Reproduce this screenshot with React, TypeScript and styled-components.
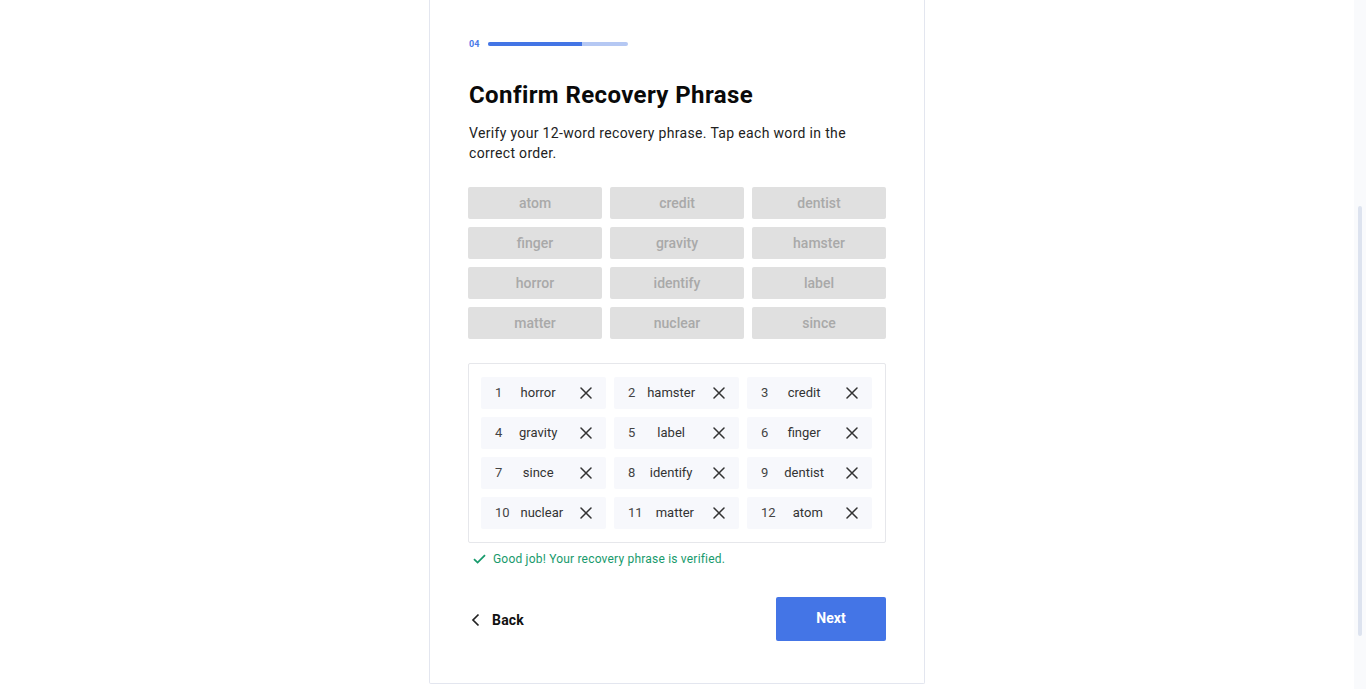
import React from 'react';
import styled, { createGlobalStyle } from 'styled-components';

const GlobalStyle = createGlobalStyle`
  html, body {
    margin: 0;
    padding: 0;
    background: #ffffff;
    overflow: hidden;
  }
  body {
    font-family: Roboto, 'Noto Sans', 'Liberation Sans', sans-serif;
    color: #111;
  }
  * {
    box-sizing: border-box;
  }
`;

const Page = styled.div`
  display: flex;
  height: 689px;
  width: 1366px;
`;

const Main = styled.main`
  flex: 1 1 auto;
  display: flex;
  justify-content: center;
  align-items: flex-end;
  padding-bottom: 5px;
`;

const ScrollTrack = styled.div`
  flex: 0 0 12px;
  background: #f9fafc;
  padding: 206px 4px 53px 4px;
  display: flex;
`;

const ScrollThumb = styled.div`
  flex: 1;
  background: #dde3ef;
  border-radius: 2px;
`;

const Card = styled.section`
  width: 496px;
  border: 1px solid #e3e6ef;
  border-top: none;
  border-radius: 0 0 2px 2px;
  padding: 38px 38px 42px;
  display: flex;
  flex-direction: column;
`;

const Progress = styled.div`
  display: flex;
  align-items: center;
  gap: 9px;
  height: 12px;
`;

const StepLabel = styled.span`
  font-size: 9px;
  font-weight: 700;
  color: #4a7ae8;
  padding-left: 1px;
`;

const Bar = styled.div`
  width: 140px;
  height: 4px;
  border-radius: 2px;
  background: #b5c8f3;
  overflow: hidden;
  display: flex;
`;

const BarFill = styled.div<{ $pct: number }>`
  width: ${(p) => p.$pct}%;
  background: #4375e5;
`;

const Title = styled.h1`
  margin: 31px 0 0;
  padding-left: 1px;
  font-size: 24px;
  line-height: 28px;
  font-weight: 700;
  letter-spacing: 0.4px;
  color: #0a0a0a;
`;

const Subtitle = styled.p`
  margin: 14px 0 0;
  padding-left: 1px;
  font-size: 14px;
  line-height: 20px;
  letter-spacing: 0.33px;
  color: #222;
  padding-right: 30px;
`;

const WordGrid = styled.div`
  margin-top: 24px;
  display: grid;
  grid-template-columns: repeat(3, 1fr);
  gap: 8px;
`;

const WordButton = styled.button`
  height: 32px;
  border: none;
  border-radius: 2px;
  background: #e0e0e0;
  color: #a9a9a9;
  font-family: Roboto, 'Noto Sans', sans-serif;
  font-size: 14px;
  font-weight: 500;
  padding: 0;
  cursor: default;
`;

const Selected = styled.div`
  margin-top: 24px;
  border: 1px solid #e6e7eb;
  border-radius: 2px;
  padding: 13px 13px 13px 12px;
  display: grid;
  grid-template-columns: repeat(3, 1fr);
  gap: 8px 8px;
`;

const Chip = styled.div`
  height: 32px;
  background: #f7f8fc;
  border-radius: 2px;
  display: flex;
  align-items: center;
  padding: 0 14px 1px;
  font-size: 13px;
  color: #333;
`;

const ChipNum = styled.span`
  color: #444;
`;

const ChipWord = styled.span`
  flex: 1;
  text-align: center;
  padding-right: 6px;
`;

const RemoveIcon = () => (
  <svg width="12" height="12" viewBox="0 0 12 12" fill="none">
    <path d="M1 1L11 11M11 1L1 11" stroke="#333" strokeWidth="1.5" strokeLinecap="round" />
  </svg>
);

const Success = styled.div`
  margin-top: 8px;
  display: flex;
  align-items: center;
  gap: 7px;
  padding-left: 5px;
  font-size: 12px;
  line-height: 16px;
  letter-spacing: 0.2px;
  color: #179a6c;
`;

const Footer = styled.div`
  margin-top: 30px;
  display: flex;
  align-items: center;
  justify-content: space-between;
`;

const BackButton = styled.button`
  display: flex;
  align-items: center;
  gap: 12px;
  border: none;
  background: none;
  padding: 0 0 0 3px;
  margin-top: 2px;
  font-family: Roboto, 'Noto Sans', sans-serif;
  font-size: 14px;
  font-weight: 700;
  letter-spacing: 0.2px;
  color: #111;
  cursor: pointer;
`;

const NextButton = styled.button`
  width: 110px;
  height: 44px;
  border: none;
  border-radius: 2px;
  background: #4475e6;
  color: #fff;
  font-family: Roboto, 'Noto Sans', sans-serif;
  font-size: 14px;
  font-weight: 700;
  padding-bottom: 3px;
  cursor: pointer;
`;

const pool = [
  'atom', 'credit', 'dentist', 'finger', 'gravity', 'hamster',
  'horror', 'identify', 'label', 'matter', 'nuclear', 'since',
];

const chosen = [
  'horror', 'hamster', 'credit', 'gravity', 'label', 'finger',
  'since', 'identify', 'dentist', 'nuclear', 'matter', 'atom',
];

export default function App() {
  return (
    <Page>
      <GlobalStyle />
      <Main>
        <Card>
          <Progress>
            <StepLabel>04</StepLabel>
            <Bar>
              <BarFill $pct={67} />
            </Bar>
          </Progress>
          <Title>Confirm Recovery Phrase</Title>
          <Subtitle>
            Verify your 12-word recovery phrase. Tap each word in the correct order.
          </Subtitle>
          <WordGrid>
            {pool.map((w) => (
              <WordButton key={w} disabled>
                {w}
              </WordButton>
            ))}
          </WordGrid>
          <Selected>
            {chosen.map((w, i) => (
              <Chip key={w}>
                <ChipNum>{i + 1}</ChipNum>
                <ChipWord>{w}</ChipWord>
                <RemoveIcon />
              </Chip>
            ))}
          </Selected>
          <Success>
            <svg width="13" height="10" viewBox="0 0 13 10" fill="none">
              <path d="M1 5.2L4.6 8.6L12 1.2" stroke="#179a6c" strokeWidth="1.8" />
            </svg>
            Good job! Your recovery phrase is verified.
          </Success>
          <Footer>
            <BackButton>
              <svg width="9" height="14" viewBox="0 0 9 14" fill="none">
                <path d="M7.5 1.5L2 7L7.5 12.5" stroke="#222" strokeWidth="1.7" />
              </svg>
              Back
            </BackButton>
            <NextButton>Next</NextButton>
          </Footer>
        </Card>
      </Main>
      <ScrollTrack>
        <ScrollThumb />
      </ScrollTrack>
    </Page>
  );
}
